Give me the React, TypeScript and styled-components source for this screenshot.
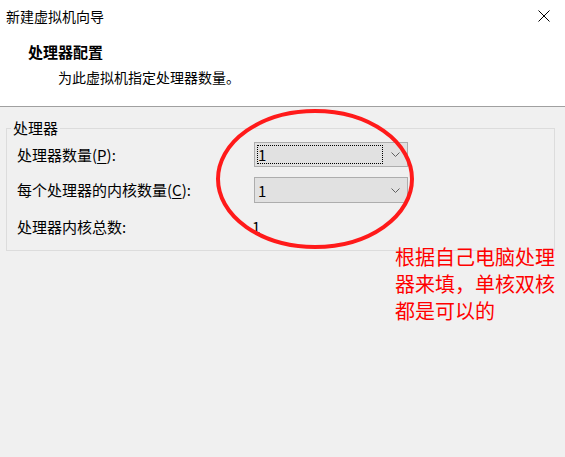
import styled, { createGlobalStyle } from "styled-components";

const GlobalStyle = createGlobalStyle`
  body {
    margin: 0;
    background: #f0f0f0;
    font-family: "Noto Sans CJK SC", "Microsoft YaHei", sans-serif;
    color: #000;
  }
`;

// 窗口整体
const Window = styled.div`
  position: relative;
  width: 565px;
  height: 457px;
  background: #f0f0f0;
  overflow: hidden;
`;

const Header = styled.header`
  background: #fff;
  height: 106px;
  border-bottom: 1px solid #a0a0a0;
`;

const TitleBar = styled.div`
  height: 31px;
  display: flex;
  align-items: center;
  justify-content: space-between;
  padding: 0 15px 0 6px;
  font-size: 14px;
`;

const CloseButton = styled.button`
  border: none;
  background: transparent;
  padding: 0;
  width: 12px;
  height: 12px;
  display: flex;
  align-items: center;
  justify-content: center;
`;

const Heading = styled.h1`
  margin: 11px 0 0 28px;
  font-size: 15px;
  line-height: 20px;
  font-weight: 700;
`;

const Subtitle = styled.p`
  margin: 5px 0 0 58px;
  font-size: 14px;
  line-height: 20px;
`;

const Body = styled.main`
  padding: 12px 10px 0 6px;
  font-size: 15px;
`;

const Group = styled.fieldset`
  margin: 0;
  padding: 5px 0 13px 10px;
  border: 1px solid #dcdcdc;
  border-radius: 0;
`;

const Legend = styled.legend`
  margin-left: -6px;
  padding: 0 2px;
  line-height: 18px;
  font-size: 15px;
`;

const Rows = styled.div`
  display: grid;
  grid-template-columns: 237px 154px;
  grid-auto-rows: auto;
  align-items: center;
`;

const Label = styled.span<{ $gap?: number }>`
  line-height: 20px;
  margin-top: ${(p) => p.$gap ?? 0}px;
`;

const Underline = styled.span`
  text-decoration: underline;
  text-underline-offset: 2px;
`;

const Combo = styled.div<{ $h: number; $gap?: number }>`
  box-sizing: border-box;
  height: ${(p) => p.$h}px;
  margin-top: ${(p) => p.$gap ?? 0}px;
  border: 1px solid #adadad;
  background: #e1e1e1;
  display: flex;
  align-items: center;
  padding: 2px;
`;

const ComboValue = styled.div<{ $focused?: boolean }>`
  flex: 1;
  height: 100%;
  box-sizing: border-box;
  display: flex;
  align-items: center;
  padding-left: 0;
  margin-right: 8px;
  border: 1px dotted ${(p) => (p.$focused ? "#000" : "transparent")};
  font-size: 15px;
`;

const Chevron = styled.svg`
  width: 9px;
  height: 5px;
  margin-right: 5px;
  flex: none;
`;

const Value = styled.span<{ $gap?: number }>`
  line-height: 20px;
  margin-top: ${(p) => p.$gap ?? 0}px;
  margin-left: -2px;
`;

const Circle = styled.svg`
  position: absolute;
  left: 215px;
  top: 108px;
  width: 200px;
  height: 142px;
  pointer-events: none;
`;

const Note = styled.div`
  position: absolute;
  left: 395px;
  top: 243px;
  width: 165px;
  color: #ff0000;
  font-size: 20px;
  line-height: 27px;
`;

const ChevronIcon = () => (
  <Chevron viewBox="0 0 9 5">
    <path d="M0.5 0.5 L4.5 4.5 L8.5 0.5" fill="none" stroke="#606060" strokeWidth="1" />
  </Chevron>
);

export default function App() {
  return (
    <Window>
      <GlobalStyle />
      <Header>
        <TitleBar>
          <span>新建虚拟机向导</span>
          <CloseButton aria-label="关闭">
            <svg width="12" height="12" viewBox="0 0 12 12">
              <path d="M0.5 0.5 L11.5 11.5 M11.5 0.5 L0.5 11.5" stroke="#000" strokeWidth="1" />
            </svg>
          </CloseButton>
        </TitleBar>
        <Heading>处理器配置</Heading>
        <Subtitle>为此虚拟机指定处理器数量。</Subtitle>
      </Header>
      <Body>
        <Group>
          <Legend>处理器</Legend>
          <Rows>
            <Label>
              处理器数量(<Underline>P</Underline>):
            </Label>
            <Combo $h={25}>
              <ComboValue $focused>1</ComboValue>
              <ChevronIcon />
            </Combo>
            <Label $gap={10}>
              每个处理器的内核数量(<Underline>C</Underline>):
            </Label>
            <Combo $h={26} $gap={10}>
              <ComboValue>1</ComboValue>
              <ChevronIcon />
            </Combo>
            <Label $gap={14}>处理器内核总数:</Label>
            <Value $gap={14}>1</Value>
          </Rows>
        </Group>
      </Body>
      <Circle viewBox="0 0 200 142">
        <ellipse cx="100" cy="71" rx="97" ry="68" fill="none" stroke="#ff1a1a" strokeWidth="4" />
      </Circle>
      <Note>根据自己电脑处理器来填，单核双核都是可以的</Note>
    </Window>
  );
}
